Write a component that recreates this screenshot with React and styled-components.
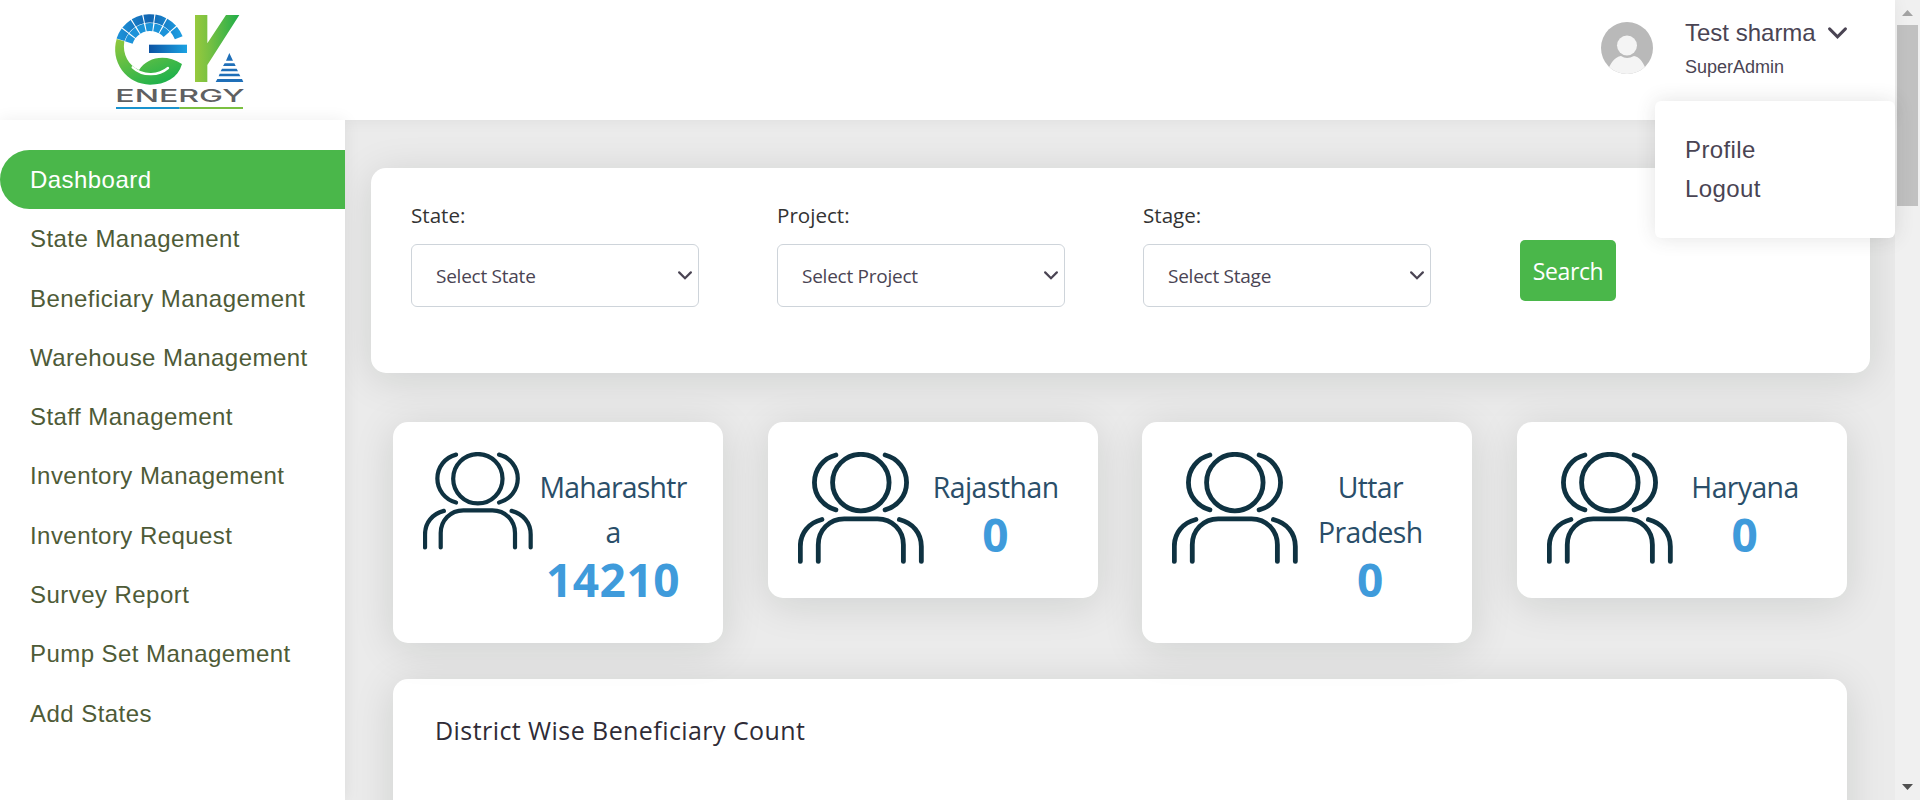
import React from "react";
import styled, { createGlobalStyle } from "styled-components";

const GlobalStyle = createGlobalStyle`
  *, *::before, *::after { box-sizing: border-box; }
  html, body { margin: 0; padding: 0; height: 100%; overflow: hidden; }
  body { font-family: "Liberation Sans", Arial, sans-serif; color: #4a4453; }
`;

const uiFont = `"Open Sans", "Noto Sans", sans-serif`;

const Shell = styled.div`
  display: flex;
  width: 100%;
  height: 800px;
  overflow: hidden;
  background: #ebebeb;
`;

const Page = styled.div`
  flex: 1;
  min-width: 0;
  display: flex;
  flex-direction: column;
  position: relative;
`;

const Header = styled.header`
  flex: none;
  height: 120px;
  display: flex;
  justify-content: space-between;
  align-items: flex-start;
  padding-left: 90px;
  background: #fff;
  box-shadow: 0 0 16px rgba(0, 0, 0, 0.06);
`;

const Account = styled.div`
  display: flex;
  align-items: flex-start;
  gap: 32px;
  width: 294px;
  padding-top: 18px;
`;

const AvatarIcon = styled.svg`
  flex: none;
  width: 52px;
  height: 52px;
  margin-top: 4px;
`;

const AccountName = styled.div`
  display: flex;
  align-items: center;
  gap: 12px;
  font-size: 24px;
  line-height: 30px;
`;

const AccountRole = styled.div`
  margin-top: 8px;
  font-size: 18px;
  line-height: 22px;
`;

const Menu = styled.div`
  position: absolute;
  z-index: 5;
  top: 101px;
  right: 0;
  width: 240px;
  height: 137px;
  padding: 29px 30px;
  background: #fff;
  border-radius: 6px;
  box-shadow: 0 0 20px rgba(60, 60, 60, 0.14);
`;

const MenuItem = styled.div`
  font-size: 24px;
  line-height: 39px;
  letter-spacing: 0.4px;
`;

const Body = styled.div`
  flex: 1;
  min-height: 0;
  display: flex;
`;

const Sidebar = styled.nav`
  flex: none;
  width: 345px;
  padding-top: 30px;
  background: #fff;
  box-shadow: 0 0 16px rgba(0, 0, 0, 0.07);
`;

const NavItem = styled.div`
  height: 59.3px;
  padding-left: 30px;
  border-radius: 30px 0 0 30px;
  font-size: 24px;
  line-height: 59.3px;
  letter-spacing: 0.45px;
  color: ${(p) => (p.$active ? "#fff" : "#4e5b37")};
  background: ${(p) => (p.$active ? "#4ab74a" : "transparent")};
`;

const Main = styled.main`
  flex: 1;
  min-width: 0;
  overflow: hidden;
  padding: 48px 25px 0 26px;
  font-family: ${uiFont};
`;

const Panel = styled.section`
  background: #fff;
  border-radius: 15px;
  box-shadow: 0 6px 42px rgba(8, 21, 14, 0.12);
`;

const FilterPanel = styled(Panel)`
  display: flex;
  gap: 78px;
  height: 205px;
  padding: 32px 40px 0;
`;

const Field = styled.div`
  width: 288px;
`;

const Label = styled.div`
  font-size: 20.6px;
  line-height: 31px;
  color: #333;
`;

const SelectBox = styled.div`
  display: flex;
  align-items: center;
  justify-content: space-between;
  height: 63px;
  margin-top: 13px;
  padding: 0 6px 0 24px;
  border: 1px solid #ced4da;
  border-radius: 6px;
  font-size: 19px;
  letter-spacing: -0.25px;
`;

const SearchButton = styled.button`
  width: 96px;
  height: 61px;
  margin: 40px 0 0 11px;
  padding: 0;
  border: 0;
  border-radius: 5px;
  background: #4ab74a;
  color: #fff;
  font-family: ${uiFont};
  font-size: 23px;
  letter-spacing: -0.4px;
`;

const CardRow = styled.div`
  display: grid;
  grid-template-columns: repeat(4, 330px);
  justify-content: space-between;
  align-items: start;
  margin: 49px 23px 0 22px;
`;

const StatCard = styled(Panel)`
  display: flex;
  align-items: flex-start;
  min-height: 176px;
  padding: 30px;
`;

const PeopleSvg = styled.svg`
  flex: none;
  width: ${(p) => p.$w}px;
  height: auto;
`;

const StatText = styled.div`
  flex: 1;
  min-width: 0;
  padding-top: 13px;
  text-align: center;
`;

const StatName = styled.div`
  font-size: 28.4px;
  line-height: 45px;
  letter-spacing: ${(p) => p.$track};
  color: #2a4e69;
`;

const StatValue = styled.div`
  padding-bottom: 9px;
  font-size: 46px;
  line-height: 49px;
  font-weight: 700;
  color: #3f9bdb;
  letter-spacing: 0.5px;
`;

const ChartPanel = styled(Panel)`
  height: 400px;
  margin: 36px 23px 0 22px;
  padding: 33px 42px;
`;

const ChartTitle = styled.h2`
  margin: 0;
  font-size: 25px;
  line-height: 36px;
  font-weight: 400;
  letter-spacing: 0.43px;
  color: #2f2b36;
`;

const ScrollTrack = styled.div`
  flex: none;
  display: flex;
  flex-direction: column;
  align-items: center;
  width: 25px;
  padding: 10px 0;
  background: #f0f0f0;
`;

const ScrollThumb = styled.div`
  width: 21px;
  height: 181px;
  margin: 9px 0 auto;
  background: #c1c1c1;
`;

const ScrollArrow = styled.svg`
  display: block;
  width: 11px;
  height: 6px;
`;

function Logo() {
  return (
    <svg width="180" height="120" viewBox="0 0 540 360">
      <defs>
        <linearGradient id="sky" x1="0" y1="0" x2="1" y2="0">
          <stop offset="0" stopColor="#1c8fd6" />
          <stop offset="0.5" stopColor="#1264b0" />
          <stop offset="1" stopColor="#1d9be0" />
        </linearGradient>
        <linearGradient id="bar" x1="0" y1="0" x2="1" y2="0">
          <stop offset="0" stopColor="#0d53a3" />
          <stop offset="1" stopColor="#1ba2e2" />
        </linearGradient>
        <linearGradient id="leaf" x1="0" y1="0" x2="0.6" y2="1">
          <stop offset="0" stopColor="#93c83d" />
          <stop offset="1" stopColor="#22b24c" />
        </linearGradient>
        <linearGradient id="kay" x1="0" y1="0" x2="1" y2="0">
          <stop offset="0" stopColor="#97c93d" />
          <stop offset="0.35" stopColor="#74c043" />
          <stop offset="1" stopColor="#1fad4a" />
        </linearGradient>
      </defs>
      <path
        d="M91.5 119.3A93 93 0 0 1 266.2 113.2"
        fill="none" stroke="url(#sky)" strokeWidth="25"
        pathLength="140" strokeDasharray="18.3 1.95"
      />
      <path
        d="M116.3 127.3A67 67 0 0 1 229.8 103.2"
        fill="none" stroke="#1c93d9" strokeWidth="24"
        pathLength="120" strokeDasharray="17.6 2.88"
      />
      <path
        d="M80 117L103 124C96 165 117 196 147 210C172 172 226 160 276 192C264 234 226 254 180 254A106 106 0 0 1 80 117Z"
        fill="url(#leaf)"
      />
      <path d="M128 202C160 232 208 226 234 204" fill="none" stroke="#fff" strokeWidth="7" strokeLinecap="round" />
      <rect x="177" y="134" width="114" height="25" fill="url(#bar)" />
      <path d="M315 45H352V130L408 45H448L352 195V246H315Z" fill="url(#kay)" />
      <path
        d="M418 159L429 182H408ZM404 190H433L437 198H399ZM396 206H440L444 214H392ZM389 221H447L451 229H386ZM382 237H456L460 246H377Z"
        fill="#1f6fb8"
      />
      <text
        x="76" y="305" fontFamily="Inter, sans-serif" fontWeight="500" fontSize="52"
        fill="#5f6062" textLength="388" lengthAdjust="spacingAndGlyphs"
      >
        ENERGY
      </text>
      <rect x="78" y="321" width="191" height="6" fill="#1a93cf" />
      <rect x="269" y="321" width="190" height="6" fill="#7cc142" />
    </svg>
  );
}

function Avatar() {
  return (
    <AvatarIcon viewBox="0 0 52 52">
      <clipPath id="face"><circle cx="26" cy="26" r="26" /></clipPath>
      <g clipPath="url(#face)">
        <rect width="52" height="52" fill="#b9b9b9" />
        <circle cx="26" cy="23.5" r="10" fill="#f4f4f4" />
        <path d="M7 48C11 37 17 34.5 20 34C24 36.5 28 36.5 33 34C38 35 42 39 45 48V54H7Z" fill="#f4f4f4" />
      </g>
    </AvatarIcon>
  );
}

function Chevron({ width, stroke }) {
  return (
    <svg width={width} height={width * 0.62} viewBox="0 0 18 11">
      <path d="M1.5 1.7L9 9.2L16.5 1.7" fill="none" stroke="#4a4453" strokeWidth={stroke} strokeLinecap="round" />
    </svg>
  );
}

function People({ width }) {
  return (
    <PeopleSvg $w={width} viewBox="0 0 379 336" fill="none" stroke="#0f3241" strokeWidth="14.5" strokeLinecap="round">
      <circle cx="189" cy="92" r="85" />
      <path d="M114 9A85 85 0 0 0 114 174" />
      <path d="M262 9A85 85 0 0 1 262 174" />
      <path d="M61 329V279C61 236 94 201 139 201H239C284 201 317 236 317 279V329" />
      <path d="M7 329V284C7 244 32 213 72 203" />
      <path d="M305 203C345 213 371 244 371 284V329" />
    </PeopleSvg>
  );
}

const navItems = [
  "Dashboard", "State Management", "Beneficiary Management", "Warehouse Management",
  "Staff Management", "Inventory Management", "Inventory Request", "Survey Report",
  "Pump Set Management", "Add States",
];

const filters = [
  { label: "State:", value: "Select State" },
  { label: "Project:", value: "Select Project" },
  { label: "Stage:", value: "Select Stage" },
];

const stats = [
  { lines: ["Maharashtr", "a"], value: "14210", icon: 110, track: "-0.75px" },
  { lines: ["Rajasthan"], value: "0", icon: 126, track: "-0.5px" },
  { lines: ["Uttar", "Pradesh"], value: "0", icon: 126, track: "-0.6px" },
  { lines: ["Haryana"], value: "0", icon: 126, track: "-0.6px" },
];

export default function App() {
  return (
    <Shell>
      <GlobalStyle />
      <Page>
        <Header>
          <Logo />
          <Account>
            <Avatar />
            <div>
              <AccountName>
                Test sharma
                <Chevron width={19} stroke={2.8} />
              </AccountName>
              <AccountRole>SuperAdmin</AccountRole>
            </div>
          </Account>
        </Header>
        <Menu>
          <MenuItem>Profile</MenuItem>
          <MenuItem>Logout</MenuItem>
        </Menu>
        <Body>
          <Sidebar>
            {navItems.map((name, i) => (
              <NavItem key={name} $active={i === 0}>{name}</NavItem>
            ))}
          </Sidebar>
          <Main>
            <FilterPanel>
              {filters.map((f) => (
                <Field key={f.label}>
                  <Label>{f.label}</Label>
                  <SelectBox>
                    {f.value}
                    <Chevron width={14} stroke={2.8} />
                  </SelectBox>
                </Field>
              ))}
              <SearchButton>Search</SearchButton>
            </FilterPanel>
            <CardRow>
              {stats.map((s) => (
                <StatCard key={s.lines[0]}>
                  <People width={s.icon} />
                  <StatText>
                    {s.lines.map((line) => (
                      <StatName key={line} $track={s.track}>{line}</StatName>
                    ))}
                    <StatValue>{s.value}</StatValue>
                  </StatText>
                </StatCard>
              ))}
            </CardRow>
            <ChartPanel>
              <ChartTitle>District Wise Beneficiary Count</ChartTitle>
            </ChartPanel>
          </Main>
        </Body>
      </Page>
      <ScrollTrack>
        <ScrollArrow viewBox="0 0 11 6"><path d="M5.5 0L11 6H0Z" fill="#a3a3a3" /></ScrollArrow>
        <ScrollThumb />
        <ScrollArrow viewBox="0 0 11 6"><path d="M5.5 6L11 0H0Z" fill="#505050" /></ScrollArrow>
      </ScrollTrack>
    </Shell>
  );
}
